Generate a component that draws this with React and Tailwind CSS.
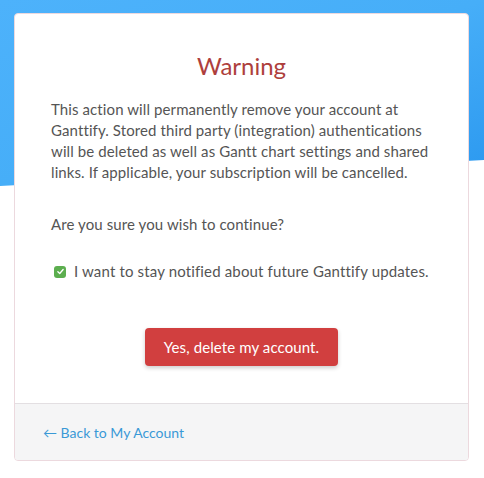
import React, { useState } from "react";

export default function App() {
  const [notify, setNotify] = useState(true);

  return (
    <div className="relative min-h-[478px] w-full bg-white font-['Lato','Noto_Sans',sans-serif]">
      {/* fond bleu incliné */}
      <div className="absolute inset-x-0 top-0 h-[186px] bg-gradient-to-br from-[#4db2fb] via-[#46aef8] to-[#2a98ef] [clip-path:polygon(0_0,100%_0,100%_160px,0_186px)]" />

      <div className="relative px-[14px] pt-[13px]">
        <div className="w-[455px] overflow-hidden rounded-[4px] border border-[#ecd9de] bg-white">
          <div className="px-[36px] pt-[36px] pb-[37px]">
            <h1 className="text-center text-[24px] leading-[31px] text-[#ae3f3d]">Warning</h1>

            <p className="mt-[18px] text-[15px] leading-[21px] tracking-[0.1px] text-[#555]">
              This action will permanently remove your account at Ganttify. Stored third party (integration)
              authentications will be deleted as well as Gantt chart settings and shared links. If applicable,
              your subscription will be cancelled.
            </p>

            <p className="mt-[31px] text-[15px] leading-[21px] tracking-[0.1px] text-[#555]">Are you sure you wish to continue?</p>

            <label className="mt-[26px] flex cursor-pointer items-center gap-[8px] pl-[3px] text-[15px] leading-[21px] tracking-[0.15px] text-[#555]">
              <span
                onClick={() => setNotify(!notify)}
                className={`flex h-[12px] w-[12px] items-center justify-center rounded-[3px] ${notify ? "bg-[#5cae4f]" : "border border-gray-400 bg-white"}`}
              >
                {notify && (
                  <svg viewBox="0 0 12 12" className="h-[9px] w-[9px]">
                    <path d="M2.5 6.3 L5 8.6 L9.5 3.4" fill="none" stroke="white" strokeWidth="1.8" strokeLinecap="round" strokeLinejoin="round" />
                  </svg>
                )}
              </span>
              I want to stay notified about future Ganttify updates.
            </label>

            <div className="mt-[46px] flex justify-center">
              <button className="h-[38px] rounded-[4px] bg-[#d13f3f] px-[19px] text-[15px] tracking-[0.1px] text-white shadow-[0_2px_4px_rgba(0,0,0,0.2)] hover:bg-[#c03535]">
                Yes, delete my account.
              </button>
            </div>
          </div>

          <div className="flex h-[57px] items-center border-t border-[#e3dfe2] bg-[#f5f5f6] px-[28px]">
            <a href="#" className="text-[14px] text-[#3a99d6] hover:underline">
              ← Back to My Account
            </a>
          </div>
        </div>
      </div>
    </div>
  );
}
